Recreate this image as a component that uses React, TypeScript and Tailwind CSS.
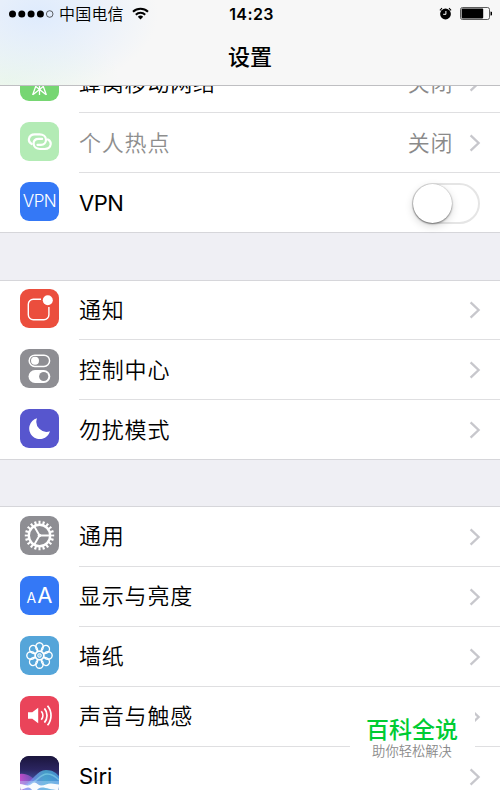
import type { ReactNode } from "react"
import clsx from "clsx"

type RowProps = {
  icon: ReactNode
  iconClass: string
  label: string
  labelClass?: string
  value?: string
  disabled?: boolean
  last?: boolean
  control?: ReactNode
}

function Chevron() {
  return (
    <svg className="h-[18px] w-[12px]" viewBox="0 0 12 18" fill="none" stroke="#c7c7cc" strokeWidth="2.3">
      <path d="M1.6 1.4 9.6 9l-8 7.6" />
    </svg>
  )
}

function Toggle() {
  return (
    <div className="mt-px h-[41px] w-[68px] rounded-full border-2 border-[#e5e5e5] bg-white">
      <div className="-ml-px -mt-px h-[39px] w-[39px] rounded-full bg-white shadow-[0_3px_8px_rgba(0,0,0,0.16),0_1px_2px_rgba(0,0,0,0.45),0_0_1px_rgba(0,0,0,0.25)]" />
    </div>
  )
}

function Row({
  icon,
  iconClass,
  label,
  labelClass = "font-[350] tracking-[0.8px]",
  value,
  disabled,
  last,
  control,
}: RowProps) {
  return (
    <div className="flex h-[60px] pl-5">
      <div className={clsx("mt-[9px] h-[39px] w-[39px] shrink-0 overflow-hidden rounded-[9px]", iconClass)}>{icon}</div>
      <div
        className={clsx(
          "ml-5 flex flex-1 items-center justify-between border-b",
          last ? "border-transparent" : "border-[#dfdfe1]",
          control ? "pr-5" : "pr-[19px]",
        )}
      >
        <span className={clsx("text-[22px]", labelClass, disabled ? "text-[#8e8e8e]" : "text-black")}>{label}</span>
        {control ?? (
          <div className="flex items-center gap-[16px]">
            {value && <span className="text-[22px] font-[350] tracking-[0.6px] text-[#8a8a8a]">{value}</span>}
            <Chevron />
          </div>
        )}
      </div>
    </div>
  )
}

function CellularIcon() {
  return (
    <svg viewBox="0 0 39 39" fill="none" stroke="#fff" strokeWidth="1.3">
      <path d="M19.5 12v21M19.5 14 12.6 33M19.5 14 26.4 33M15.8 24.500 25.800 32.400M23.200 24.500 13.200 32.400" />
      <circle cx="19.5" cy="11" r="2.5" fill="#fff" />
    </svg>
  )
}

function HotspotIcon() {
  return (
    <svg viewBox="0 0 39 39" fill="none" stroke="#fff" strokeWidth="2.2" strokeLinecap="round">
      <path d="M11.7 22C9.4 20.9 8.7 19 8.9 17.2 9.3 14.3 11.8 12.4 14.8 12.4H19.6C23.3 12.4 26 14.6 26 17.8 26 20.9 23.8 22.8 21 22.8H17.5" />
      <path d="M27.9 17.4C30.2 18.5 30.9 20.4 30.7 22.2 30.3 25.1 27.8 27 24.8 27H20C16.3 27 13.6 24.8 13.6 21.6 13.6 18.5 15.8 16.9 18.6 16.9H22.1" />
    </svg>
  )
}

function NotificationsIcon() {
  return (
    <svg viewBox="0 0 39 39" fill="none">
      <path
        d="M21 10.3H13.3A5 5 0 0 0 8.3 15.3V25.7A5 5 0 0 0 13.3 30.7H23.9A5 5 0 0 0 28.9 25.7V18"
        stroke="#fff"
        strokeWidth="1.4"
      />
      <circle cx="27.8" cy="11.2" r="5" fill="#fff" />
    </svg>
  )
}

function ControlCenterIcon() {
  return (
    <svg viewBox="0 0 39 39" fill="none">
      <rect x="9.2" y="6.2" width="20.4" height="11.2" rx="5.6" stroke="#fff" strokeWidth="1.5" />
      <circle cx="15" cy="11.8" r="4" fill="#fff" />
      <rect x="8.5" y="21" width="21.8" height="13" rx="6.5" fill="#fff" />
      <circle cx="23.7" cy="27.5" r="4.6" fill="#8e8e93" />
    </svg>
  )
}

function MoonIcon() {
  return (
    <svg viewBox="0 0 39 39">
      <path d="M17 9.2A10.6 10.6 0 1 0 30 22.3 10.2 10.2 0 0 1 17 9.2Z" fill="#fff" />
    </svg>
  )
}

function GearIcon() {
  return (
    <svg viewBox="0 0 39 39" fill="none" stroke="#fff">
      <circle cx="19.5" cy="19.5" r="10.7" strokeWidth="2.4" />
      <circle
        cx="19.5"
        cy="19.5"
        r="13"
        strokeWidth="3.4"
        pathLength="80"
        strokeDasharray="2 2"
        strokeDashoffset="1"
      />
      <path d="M19.5 19.5H29.5M19.5 19.5 14.5 10.8M19.5 19.5 14.5 28.2" strokeWidth="1.9" />
      <circle cx="19.5" cy="19.5" r="1.8" fill="#fff" stroke="none" />
    </svg>
  )
}

function WallpaperIcon() {
  return (
    <svg viewBox="0 0 39 39" fill="none" stroke="#fff" strokeWidth="1.4">
      {[0, 45, 90, 135, 180, 225, 270, 315].map((angle) => (
        <ellipse key={angle} cx="19.5" cy="11.1" rx="3.7" ry="4.3" transform={`rotate(${angle} 19.5 19.5)`} />
      ))}
      <circle cx="19.5" cy="19.5" r="4.3" strokeWidth="1.6" />
      <circle cx="19.5" cy="19.5" r="1.9" fill="#fff" fillOpacity="0.45" strokeWidth="0.8" />
    </svg>
  )
}

function SoundIcon() {
  return (
    <svg viewBox="0 0 39 39" fill="none" stroke="#fff" strokeWidth="1.7">
      <path d="M8 16.2h4.3l5.900-4.400v15.400l-5.900-4.400H8Z" fill="#fff" stroke="none" />
      <path d="M21.3 15.3a6.5 6.5 0 0 1 0 8.4M24.4 12.4a11 11 0 0 1 0 14.2M27.5 9.7a15.4 15.4 0 0 1 0 19.6" />
    </svg>
  )
}

function SiriIcon() {
  return (
    <svg viewBox="0 0 39 39">
      <defs>
        <linearGradient id="siriBg" x1="0" y1="0" x2="0" y2="1">
          <stop offset="0" stopColor="#1b153c" />
          <stop offset="0.35" stopColor="#2b2560" />
          <stop offset="0.75" stopColor="#4a63b8" />
        </linearGradient>
        <linearGradient id="siriPink" x1="0" y1="0" x2="1" y2="0">
          <stop offset="0" stopColor="#e04fd6" />
          <stop offset="1" stopColor="#8a6cf0" stopOpacity="0.4" />
        </linearGradient>
        <linearGradient id="siriTeal" x1="0" y1="0" x2="1" y2="0">
          <stop offset="0" stopColor="#8a7cf5" />
          <stop offset="0.6" stopColor="#4cb8dd" />
          <stop offset="1" stopColor="#4aa0e6" />
        </linearGradient>
      </defs>
      <rect width="39" height="39" fill="url(#siriBg)" />
      <path d="M0 18C7 17 12 21 20 28V39H0Z" fill="url(#siriPink)" opacity="0.8" />
      <path d="M4 29C13 25 17 14 26 14 33 14 36 17 39 20V39H4Z" fill="url(#siriTeal)" opacity="0.8" />
      <path d="M8 29C17 26 20 18 27 18 33 18 36 21 39 24" fill="none" stroke="#9ceaf5" strokeWidth="1.6" opacity="0.45" />
      <path d="M0 25H39V39H0Z" fill="#b5dcfa" opacity="0.4" />
      <path
        d="M0 28C3 28 5 29.500 8 29.500 11 29.500 12 26.500 14.500 26.500 17 26.500 18 29.500 21 29.500 25 29.500 27 27.500 31 27.500 34 27.500 36 28.500 39 28.500V34C30 34 27 31.500 22 31.500 18 31.500 17 35 14.500 35 12 35 11 31.500 8 31.500 5 31.500 3 34 0 34Z"
        fill="#fff"
        opacity="0.95"
      />
    </svg>
  )
}

function StatusBar() {
  return (
    <div className="grid h-[27px] grid-cols-[1fr_auto_1fr] items-center pl-[9px] pr-2">
      <div className="flex items-center">
        <svg className="h-[8px] w-[45px]" viewBox="0 0 45 8">
          <circle cx="3.5" cy="4" r="3.5" />
          <circle cx="12.8" cy="4" r="3.5" />
          <circle cx="22.1" cy="4" r="3.5" />
          <circle cx="31.4" cy="4" r="3.5" />
          <circle cx="40.7" cy="4" r="3.3" fill="none" stroke="#222" strokeWidth="0.7" />
        </svg>
        <span className="ml-[5px] text-base font-[350] tracking-[0.2px]">中国电信</span>
        <svg className="ml-[8px] h-[13px] w-[17px]" viewBox="0 0 17 13" fill="none" stroke="#000" strokeWidth="2">
          <path d="M1 4.7a10.8 10.8 0 0 1 15 0M3.8 7.7a6.8 6.8 0 0 1 9.4 0" />
          <path d="M5.8 9.8a4 4 0 0 1 5.400 0L8.500 12.500Z" fill="#000" stroke="none" />
        </svg>
      </div>
      <span className="pl-[2px] font-['Inter'] text-[16px] font-semibold tracking-[0.4px]">14:23</span>
      <div className="flex items-center justify-end gap-[8px]">
        <svg className="h-[13px] w-[13px]" viewBox="0 0 13 13" fill="none">
          <circle cx="6.5" cy="7" r="5.4" fill="#000" />
          <path d="M0.9 3.3 3 1.2M12.1 3.3 10 1.2" stroke="#000" strokeWidth="1.1" />
          <path d="M6.9 4v3.300H4.200" stroke="#fff" strokeWidth="1" />
        </svg>
        <svg className="h-[13px] w-[32px]" viewBox="0 0 32 13" fill="none">
          <rect x="0.5" y="0.5" width="29" height="12" rx="2" stroke="#333" strokeWidth="0.8" />
          <rect x="1.6" y="1.6" width="21.6" height="9.8" rx="0.8" fill="#000" />
          <path d="M30.5 4.500a2 2 0 0 1 0 4Z" fill="#000" />
        </svg>
      </div>
    </div>
  )
}

export default function App() {
  return (
    <div className="h-[790px] w-[500px] overflow-hidden bg-[#efeff4] font-['Inter','Noto_Sans_CJK_SC',sans-serif] leading-none text-black">
      {/* Navigation bar */}
      <header className="relative z-10 h-[86px] border-b border-[#bfbfc2] bg-[#f7f7f7] bg-[radial-gradient(ellipse_120px_75px_at_38px_14px,#deebfd,transparent),radial-gradient(ellipse_110px_60px_at_10px_80px,#ebf7ec,transparent)]">
        <StatusBar />
        <h1 className="mt-[19px] text-center text-[22px] font-medium">设置</h1>
      </header>

      {/* Settings list, scrolled under the bar */}
      <main className="-mt-[33px]">
        <section className="h-[180px] bg-white shadow-[inset_0_-1px_0_#d6d6da]">
          <Row icon={<CellularIcon />} iconClass="bg-[#76d672]" label="蜂窝移动网络" value="关闭" />
          <Row icon={<HotspotIcon />} iconClass="bg-[#b3ebb5]" label="个人热点" value="关闭" disabled />
          <Row
            icon={
              <span className="flex h-full items-center justify-center text-[17px] font-[350] tracking-[-0.5px] text-white">
                VPN
              </span>
            }
            iconClass="bg-[#3478f6]"
            label="VPN"
            labelClass="tracking-[-0.5px]"
            control={<Toggle />}
            last
          />
        </section>

        <section className="mt-[47px] h-[180px] bg-white shadow-[inset_0_1px_0_#d6d6da,inset_0_-1px_0_#d6d6da]">
          <Row icon={<NotificationsIcon />} iconClass="bg-[#eb4e3d]" label="通知" />
          <Row icon={<ControlCenterIcon />} iconClass="bg-[#8e8e93]" label="控制中心" />
          <Row icon={<MoonIcon />} iconClass="bg-[#5756ce]" label="勿扰模式" last />
        </section>

        <section className="mt-[46px] bg-white pt-px shadow-[inset_0_1px_0_#d6d6da]">
          <Row icon={<GearIcon />} iconClass="bg-[#8e8e93]" label="通用" labelClass="pb-0.5 font-[350] tracking-[0.8px]" />
          <Row
            icon={
              <span className="flex h-full items-baseline justify-center gap-px pt-[8px] text-white">
                <span className="text-[14px]">A</span>
                <span className="text-[22px]">A</span>
              </span>
            }
            iconClass="bg-[#3478f6]"
            label="显示与亮度"
            labelClass="pb-0.5 font-[350] tracking-[0.8px]"
          />
          <Row
            icon={<WallpaperIcon />}
            iconClass="bg-[#55a5d9]"
            label="墙纸"
            labelClass="pb-0.5 font-[350] tracking-[0.8px]"
          />
          <Row
            icon={<SoundIcon />}
            iconClass="bg-[#ea445a]"
            label="声音与触感"
            labelClass="pb-0.5 font-[350] tracking-[0.8px]"
          />
          <Row icon={<SiriIcon />} iconClass="bg-[#1c1845]" label="Siri" labelClass="pb-0.5" last />
        </section>
      </main>

      {/* Watermark */}
      <div className="absolute left-[350px] top-[707px] flex h-[58px] w-[125px] flex-col items-center bg-white pr-px pt-[12px]">
        <span className="text-[23px] font-medium text-[#0c3]">百科全说</span>
        <span className="mt-[3px] text-[13.3px] font-[350] text-[#8a8a8a]">助你轻松解决</span>
      </div>
    </div>
  )
}
